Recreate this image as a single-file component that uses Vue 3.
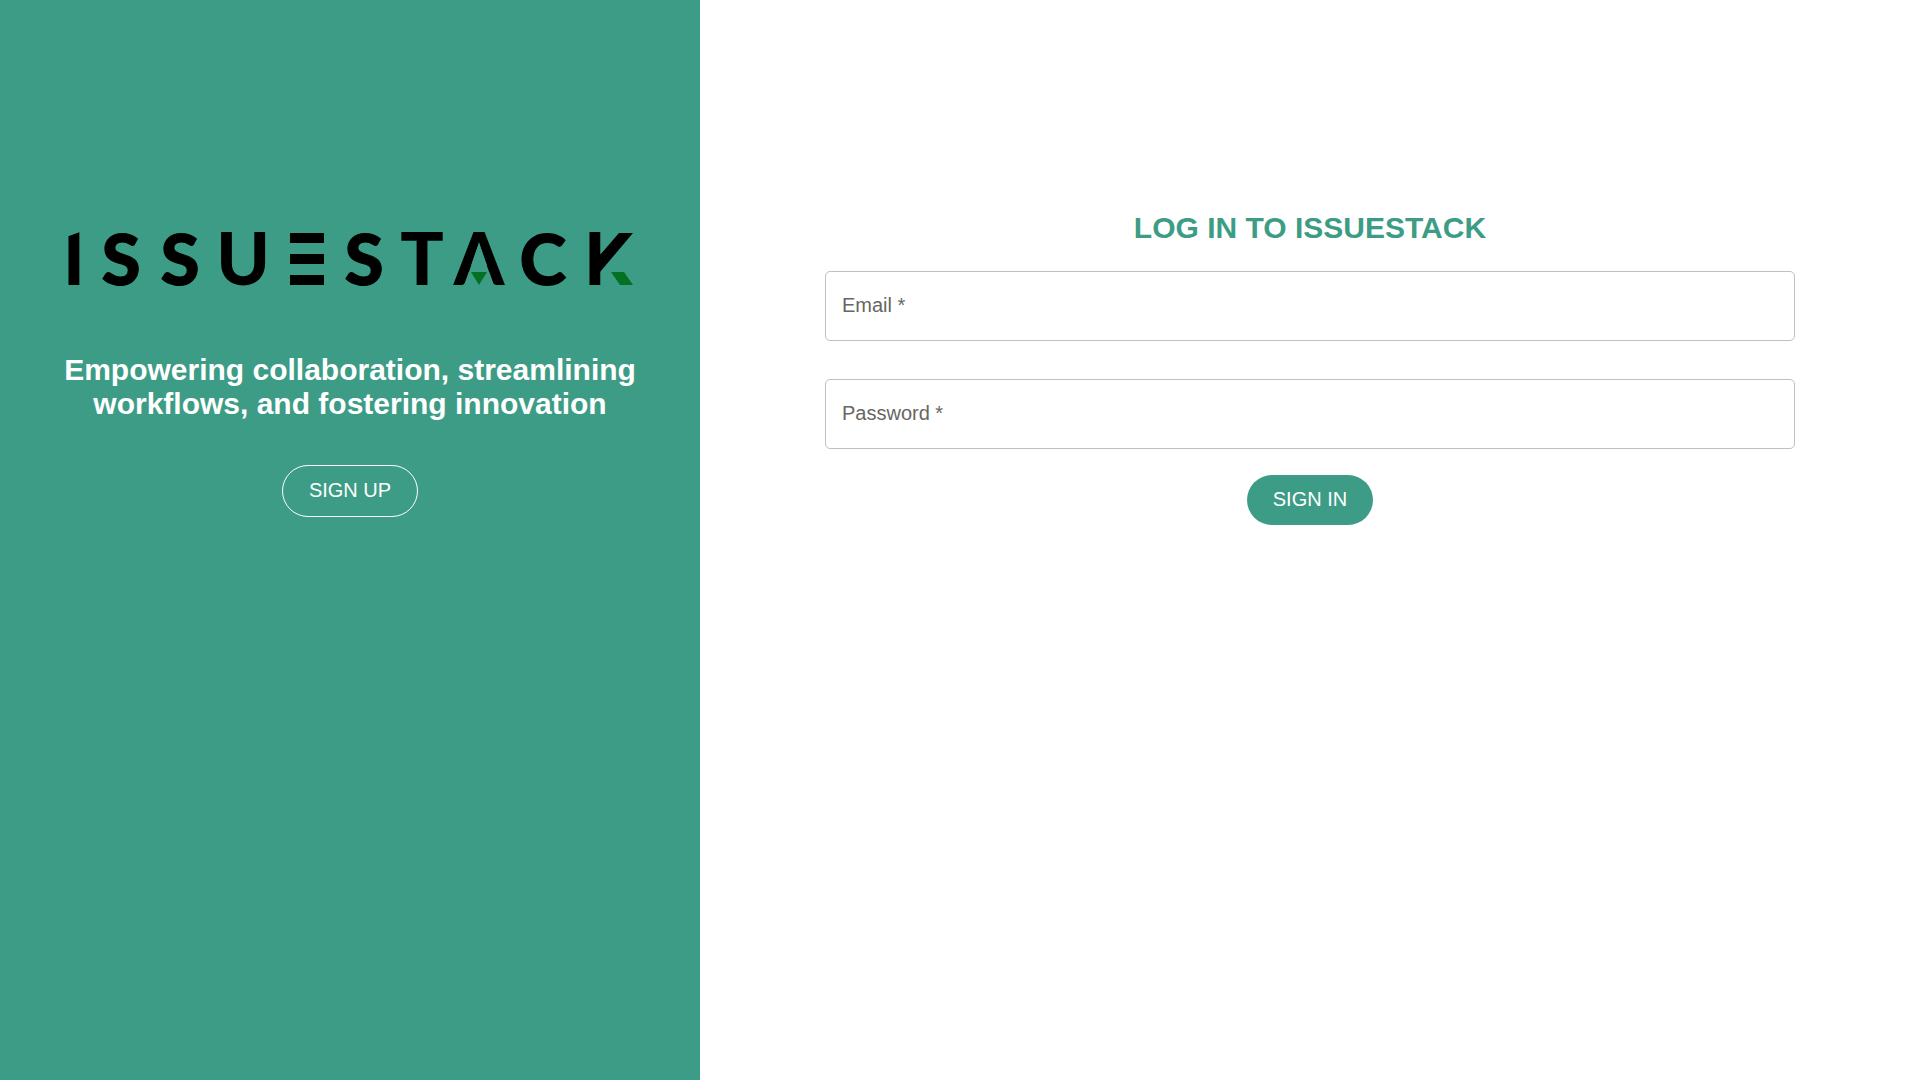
<script setup>
import { ref } from 'vue'

const fields = [
  { id: 'email', label: 'Email *', type: 'email', autocomplete: 'username' },
  { id: 'password', label: 'Password *', type: 'password', autocomplete: 'current-password' }
]
const values = ref({ email: '', password: '' })
</script>

<template>
  <main class="page">
    <section class="intro">
      <svg class="logo" viewBox="0 -30 580 120" role="img" aria-label="Issuestack">
        <defs>
          <clipPath id="cut-i"><polygon points="0,6 9,6 20,2 20,60 0,60" /></clipPath>
          <clipPath id="cut-k"><polygon points="520,0 541,0 541,60 520,60" /></clipPath>
        </defs>
        <g class="word">
          <g clip-path="url(#cut-i)"><text x="14" y="55">I</text></g>
          <text class="round" x="61" y="55">S</text>
          <text class="round" x="120" y="55">S</text>
          <text x="183" y="55">U</text>
          <text class="round" x="304" y="55">S</text>
          <text x="362" y="55">T</text>
          <text x="419" y="55">A</text>
          <text class="round" x="483" y="55">C</text>
          <g clip-path="url(#cut-k)"><text x="549" y="55">K</text></g>
        </g>
        <rect x="230" y="3" width="34" height="10" />
        <rect x="230" y="24" width="34" height="10" />
        <rect x="230" y="45" width="34" height="10" />
        <polygon class="gap" points="419,13 434,56 404,56" />
        <polygon points="540,25 559,3 573,3 540,42" />
        <polygon class="accent" points="411,42 427,42 419,55" />
        <polygon class="accent" points="551,42 564,42 573,55 560,55" />
      </svg>
      <h2 class="tagline">Empowering collaboration, streamlining workflows, and fostering innovation</h2>
      <button class="btn outlined" type="button">SIGN UP</button>
    </section>

    <section class="login">
      <form class="form" @submit.prevent>
        <h1 class="title">LOG IN TO ISSUESTACK</h1>
        <div v-for="f in fields" :key="f.id" class="field">
          <input
            :id="f.id"
            v-model="values[f.id]"
            :type="f.type"
            :autocomplete="f.autocomplete"
          />
          <label v-show="!values[f.id]" :for="f.id">{{ f.label }}</label>
        </div>
        <button class="btn filled" type="submit">SIGN IN</button>
      </form>
    </section>
  </main>
</template>

<style>
body {
  margin: 0;
  background: #fff;
}
</style>

<style scoped>
.page {
  --brand: #3d9c85;
  display: grid;
  grid-template-columns: 35fr 61fr;
  min-height: 100vh;
  font-family: "Liberation Sans", Arial, sans-serif;
}
.intro {
  display: flex;
  flex-direction: column;
  align-items: center;
  padding: 200px 60px 60px;
  background: var(--brand);
}
.logo {
  display: block;
  width: 100%;
}
.word {
  font-family: Lato, sans-serif;
  font-size: 72px;
  font-weight: 900;
  text-anchor: middle;
}
.round {
  font-size: 71px;
  stroke: #000;
  stroke-width: 1px;
}
.gap {
  fill: var(--brand);
}
.accent {
  fill: #047022;
}
.tagline {
  margin: 33px 0 44px;
  font-size: 30px;
  line-height: 34px;
  font-weight: 700;
  text-align: center;
  color: #fff;
}
.login {
  padding: 210px 125px 60px;
}
.form {
  display: flex;
  flex-direction: column;
  align-items: center;
}
.title {
  margin: 0 0 25px;
  font-size: 30px;
  line-height: 36px;
  font-weight: 700;
  color: var(--brand);
}
.field {
  display: grid;
  width: 100%;
  margin-bottom: 38px;
}
.field:last-of-type {
  margin-bottom: 26px;
}
.field > * {
  grid-area: 1 / 1;
}
.field input {
  box-sizing: border-box;
  width: 100%;
  height: 70px;
  padding: 0 17px;
  border: 1px solid #c0c0c0;
  border-radius: 5px;
  background: none;
  font: inherit;
  font-size: 20px;
  outline: none;
}
.field input:focus {
  border-color: var(--brand);
}
.field label {
  align-self: center;
  justify-self: start;
  padding: 0 0 2px 17px;
  font-size: 20px;
  line-height: 24px;
  color: #666;
  pointer-events: none;
}
.btn {
  box-sizing: border-box;
  padding: 0 26px 2px;
  border: 0;
  border-radius: 26px;
  font: inherit;
  font-size: 20px;
  color: #fff;
  cursor: pointer;
}
.outlined {
  height: 52px;
  border: 1px solid #fff;
  background: none;
}
.filled {
  height: 50px;
  background: var(--brand);
}
</style>
